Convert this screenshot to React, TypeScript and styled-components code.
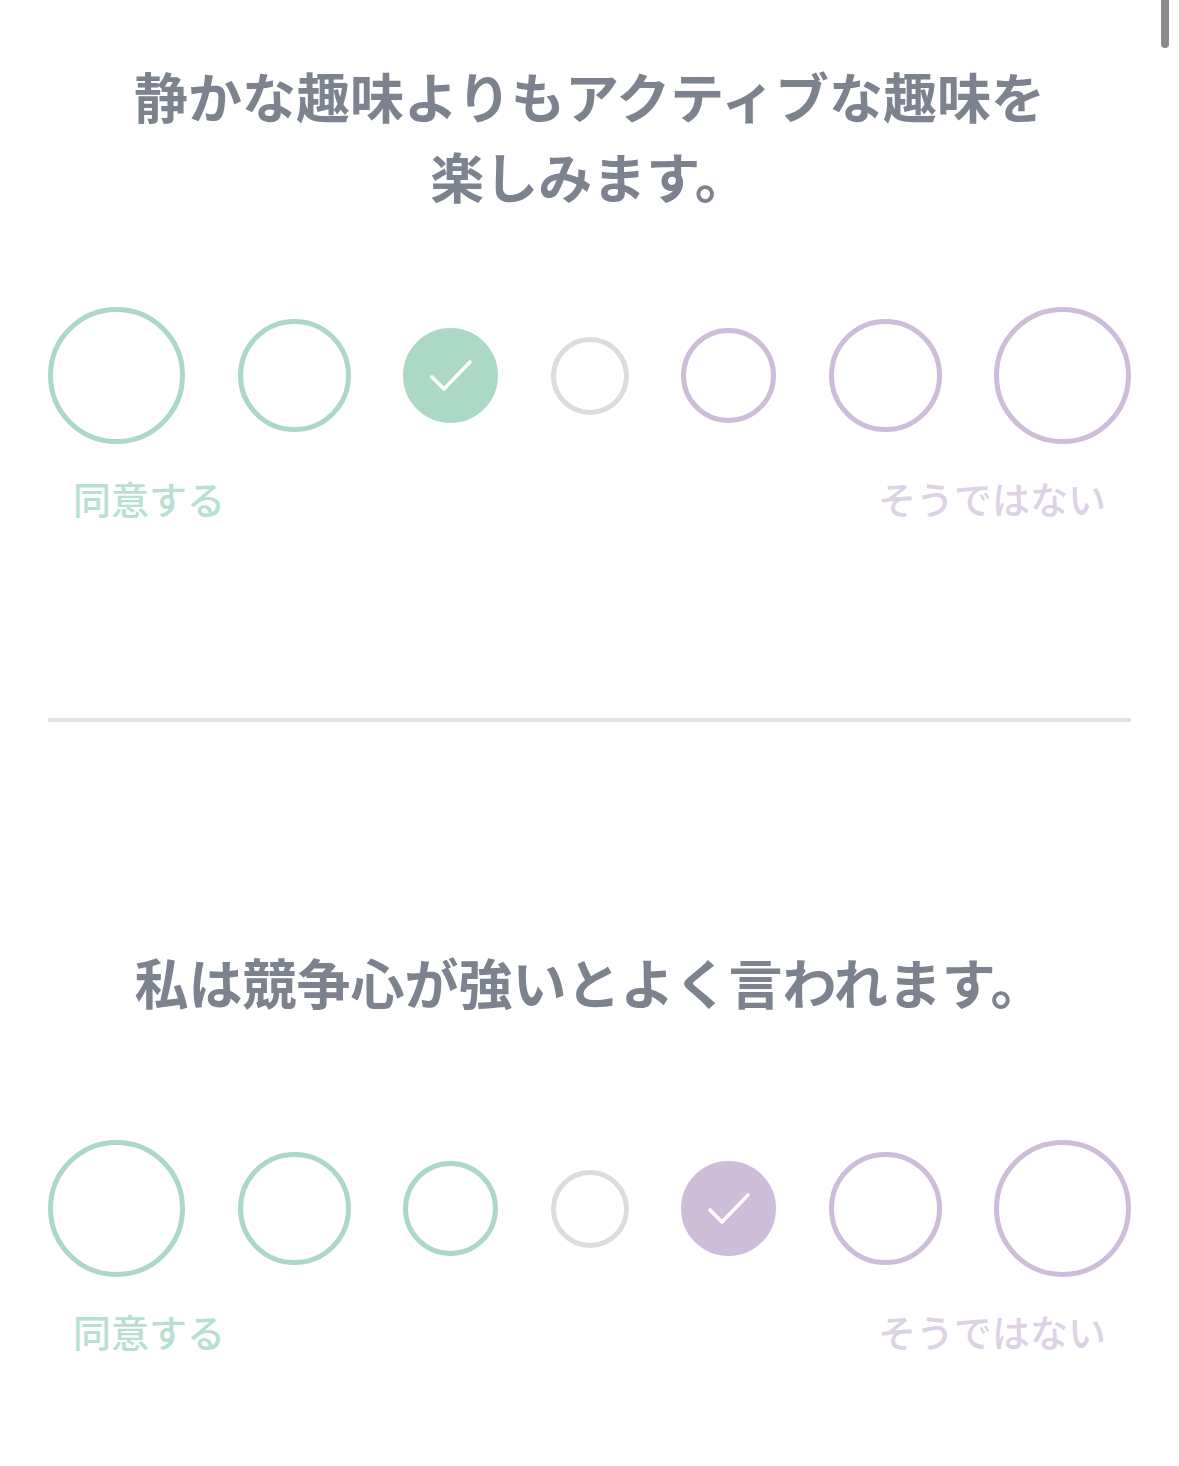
import React from "react";
import styled, { createGlobalStyle } from "styled-components";

const GlobalStyle = createGlobalStyle`
  html, body { margin: 0; padding: 0; background: #ffffff; }
  body { font-family: "Noto Sans CJK JP", "Noto Sans", sans-serif; }
  * { box-sizing: border-box; }
`;

const Page = styled.div`
  position: relative;
  width: 1179px;
  min-height: 1466px;
  padding: 0 48px;
  background: #ffffff;
`;

const Scrollbar = styled.div`
  position: absolute;
  top: 0;
  right: 10px;
  width: 8px;
  height: 48px;
  border-radius: 0 0 4px 4px;
  background: #8b8b8b;
`;

const Section = styled.section<{ $top: number; $gap: number }>`
  display: flex;
  flex-direction: column;
  padding-top: ${(p) => p.$top}px;
  --scale-gap: ${(p) => p.$gap}px;
`;

const QuestionText = styled.h2`
  margin: 0 auto;
  max-width: 950px;
  font-size: 54px;
  line-height: 80px;
  font-weight: 700;
  color: #7d838e;
  text-align: center;
`;

const Scale = styled.div`
  display: flex;
  justify-content: space-between;
  align-items: center;
  height: 137px;
  margin-top: var(--scale-gap);
`;

type Tone = "agree" | "neutral" | "disagree";

const toneColor: Record<Tone, string> = {
  agree: "#acd8c6",
  neutral: "#dcdcdc",
  disagree: "#cdbdd8",
};

const Option = styled.button<{ $size: number; $tone: Tone; $checked: boolean }>`
  display: flex;
  align-items: center;
  justify-content: center;
  width: ${(p) => p.$size}px;
  height: ${(p) => p.$size}px;
  padding: 0;
  border-radius: 50%;
  border: 5px solid ${(p) => toneColor[p.$tone]};
  background: ${(p) => (p.$checked ? toneColor[p.$tone] : "#ffffff")};
  cursor: pointer;
  flex: none;
`;

const Labels = styled.div`
  display: flex;
  justify-content: space-between;
  margin-top: 29px;
  padding: 0 25px;
  font-size: 38px;
  line-height: 50px;
  font-weight: 500;
`;

const Label = styled.span<{ $tone: Tone }>`
  color: ${(p) => (p.$tone === "agree" ? "#b8e0d1" : "#ddd2e5")};
`;

const Divider = styled.hr`
  margin: 195px 0 0;
  border: none;
  height: 4px;
  background: #e1e1e6;
`;

const sizes = [137, 113, 95, 78, 95, 113, 137];
const tones: Tone[] = ["agree", "agree", "agree", "neutral", "disagree", "disagree", "disagree"];

const Check = () => (
  <svg width="44" height="36" viewBox="0 0 44 36" fill="none">
    <path d="M3 19 L15 31 L41 4" stroke="#ffffff" strokeWidth="3.6" strokeLinecap="round" strokeLinejoin="round" />
  </svg>
);

function Question({ text, selected, top, gap }: { text: React.ReactNode; selected: number; top: number; gap: number }) {
  return (
    <Section $top={top} $gap={gap}>
      <QuestionText>{text}</QuestionText>
      <Scale>
        {sizes.map((s, i) => (
          <Option key={i} $size={s} $tone={tones[i]} $checked={i === selected} aria-label={`option ${i + 1}`}>
            {i === selected && <Check />}
          </Option>
        ))}
      </Scale>
      <Labels>
        <Label $tone="agree">同意する</Label>
        <Label $tone="disagree">そうではない</Label>
      </Labels>
    </Section>
  );
}

export default function App() {
  return (
    <>
      <GlobalStyle />
      <Page>
        <Scrollbar />
        <Question text="静かな趣味よりもアクティブな趣味を楽しみます。" selected={2} top={56} gap={91} />
        <Divider />
        <Question text="私は競争心が強いとよく言われます。" selected={4} top={220} gap={118} />
      </Page>
    </>
  );
}
